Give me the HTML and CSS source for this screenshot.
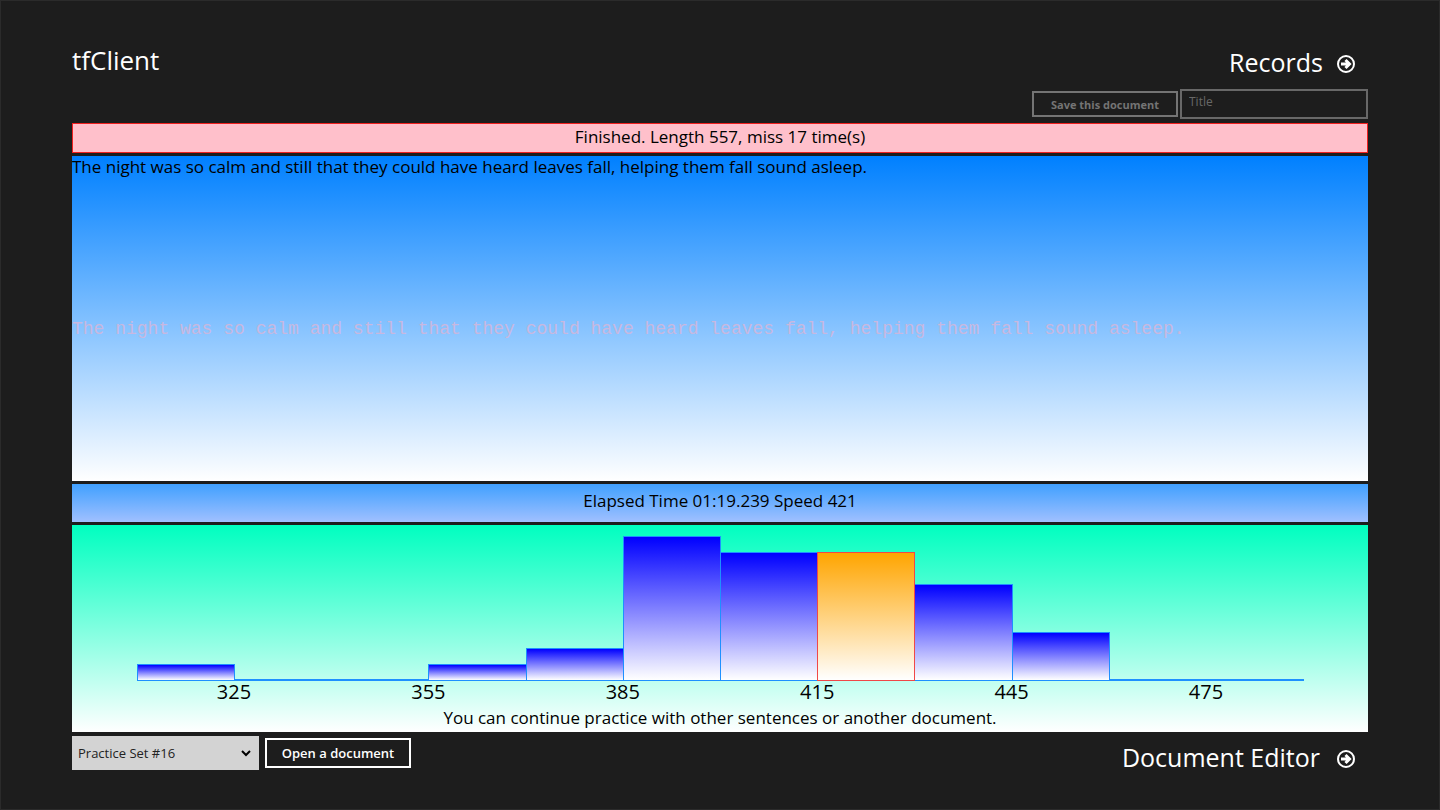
FILE: index.html
```html
<!DOCTYPE html>
<html lang="en">
<head>
<meta charset="utf-8">
<meta name="viewport" content="width=device-width, initial-scale=1">
<title>tfClient</title>
<link rel="stylesheet" href="styles.css">
</head>
<body>
<div class="page">
  <header class="header">
    <h1 class="title">tfClient</h1>
    <a class="nav-link" href="#records">Records
      <svg class="nav-icon" viewBox="0 0 20 20" aria-hidden="true"><circle cx="10" cy="10" r="8"/><path d="M5 10h9M9.500 6 13.500 10l-4 4"/></svg>
    </a>
  </header>

  <form class="save-bar">
    <button class="button" type="button" disabled>Save this document</button>
    <input class="title-input" type="text" placeholder="Title" aria-label="Title" disabled>
  </form>

  <main class="main">
    <p class="status">Finished. Length 557, miss 17 time(s)</p>
    <section class="practice">
      <p class="source">The night was so calm and still that they could have heard leaves fall, helping them fall sound asleep.</p>
      <p class="typed">The night was so calm and still that they could have heard leaves fall, helping them fall sound asleep.</p>
    </section>
    <p class="elapsed">Elapsed Time 01:19.239 Speed 421</p>
    <section class="chart">
      <div class="bars">
        <div class="bar" style="height:17px"></div>
        <div class="bar bar-empty"></div>
        <div class="bar bar-empty"></div>
        <div class="bar" style="height:17px"></div>
        <div class="bar" style="height:33px"></div>
        <div class="bar" style="height:145px"></div>
        <div class="bar" style="height:129px"></div>
        <div class="bar bar-current" style="height:129px"></div>
        <div class="bar" style="height:97px"></div>
        <div class="bar" style="height:49px"></div>
        <div class="bar bar-empty"></div>
        <div class="bar bar-empty"></div>
      </div>
      <div class="labels">
        <span>325</span><span>355</span><span>385</span><span>415</span><span>445</span><span>475</span>
      </div>
      <p class="hint">You can continue practice with other sentences or another document.</p>
    </section>
  </main>

  <footer class="footer">
    <div class="document-picker">
      <div class="select-wrap">
        <select class="select" aria-label="Practice set"><option>Practice Set #16</option></select>
        <svg class="chevron" viewBox="0 0 12 8" aria-hidden="true"><path d="M2 2l4 4 4-4"/></svg>
      </div>
      <button class="button button-open" type="button">Open a document</button>
    </div>
    <a class="nav-link nav-editor" href="#editor">Document Editor
      <svg class="nav-icon" viewBox="0 0 20 20" aria-hidden="true"><circle cx="10" cy="10" r="8"/><path d="M5 10h9M9.500 6 13.500 10l-4 4"/></svg>
    </a>
  </footer>
</div>
</body>
</html>
```
FILE: styles.css
```css
* { box-sizing: border-box; }

body {
  margin: 0;
  background: #1d1d1d;
  color: #fff;
  font-family: "Open Sans", "Noto Sans", sans-serif;
}

h1, p { margin: 0; }

.page {
  min-height: 100vh;
  display: flex;
  flex-direction: column;
  padding: 40px 5%;
  box-shadow: inset 0 0 0 1px #2b2b2b;
}

.header {
  display: flex;
  justify-content: space-between;
  height: 49px;
}

.title {
  font-size: 26px;
  font-weight: 400;
  line-height: 40px;
}

.nav-link {
  display: flex;
  align-items: center;
  gap: 13px;
  height: 44px;
  padding-right: 12px;
  color: #fff;
  font-size: 25px;
  line-height: 42px;
  text-decoration: none;
}

.nav-editor {
  gap: 16px;
  height: 42px;
}

.nav-icon {
  width: 20px;
  height: 20px;
  margin-top: 4px;
  fill: none;
  stroke: #fff;
  stroke-width: 2;
}

.nav-icon path { stroke-width: 3; }

.save-bar {
  display: flex;
  justify-content: flex-end;
  align-items: center;
  gap: 2px;
  height: 30px;
  margin-bottom: 4px;
}

.button {
  width: 146px;
  height: 26px;
  padding: 0;
  border: 2px solid #747474;
  background: transparent;
  color: #747474;
  font: 700 11px "Open Sans", sans-serif;
}

.title-input {
  width: 188px;
  height: 30px;
  padding: 0 7px 5px;
  border: 2px solid #686868;
  background: transparent;
  color: #fff;
  font: 12px "Open Sans", sans-serif;
}

.title-input::placeholder { color: #686868; opacity: 1; }

.main {
  flex: 1;
  display: flex;
  flex-direction: column;
  gap: 3px;
  color: #000;
  font-size: 17px;
}

.status {
  height: 30px;
  border: 1px solid #f02020;
  background: #ffc0cb;
  line-height: 26px;
  text-align: center;
}

.practice {
  flex: 1;
  display: grid;
  grid-template-rows: 1fr 1fr;
  background: linear-gradient(#0080ff, #fff);
}

.source { line-height: 22px; }

.typed {
  color: #c8b8e0;
  font-family: "Liberation Mono", monospace;
  font-size: 18px;
  line-height: 20px;
}

.elapsed {
  height: 38px;
  background: linear-gradient(#40a0ff, #a0c0ff);
  line-height: 34px;
  text-align: center;
}

.chart {
  padding: 10px 5% 0;
  background: linear-gradient(#00ffc0, #fff);
}

.bars {
  display: grid;
  grid-template-columns: repeat(12, 1fr);
  align-items: end;
  height: 146px;
}

.bar {
  margin-right: -1px;
  border: 1px solid #1e90ff;
  background: linear-gradient(#00f, #fff);
}

.bar-empty { height: 2px; }

.bar-current {
  z-index: 1;
  border-color: #f04848;
  background: linear-gradient(#ffa500, #fff);
}

.labels {
  display: grid;
  grid-template-columns: repeat(6, 1fr);
  font-size: 20px;
  line-height: 22px;
  text-align: center;
}

.hint {
  padding: 3px 0 2px;
  line-height: 24px;
  text-align: center;
}

.footer {
  display: flex;
  justify-content: space-between;
  height: 38px;
  padding-top: 4px;
}

.document-picker {
  display: flex;
  align-items: center;
  gap: 6px;
  height: 34px;
}

.select-wrap {
  display: grid;
  align-items: center;
  width: 187px;
}

.select {
  grid-area: 1 / 1;
  height: 34px;
  padding: 0 28px 0 6px;
  border: 0;
  border-radius: 0;
  appearance: none;
  background: #d3d3d3;
  color: #222;
  font: 13px "Open Sans", sans-serif;
}

.chevron {
  grid-area: 1 / 1;
  justify-self: end;
  width: 12px;
  height: 8px;
  margin-right: 7px;
  fill: none;
  stroke: #000;
  stroke-width: 2;
  pointer-events: none;
}

.button-open {
  height: 30px;
  border-color: #fff;
  color: #fff;
  font-size: 13px;
  font-weight: 600;
}
```
